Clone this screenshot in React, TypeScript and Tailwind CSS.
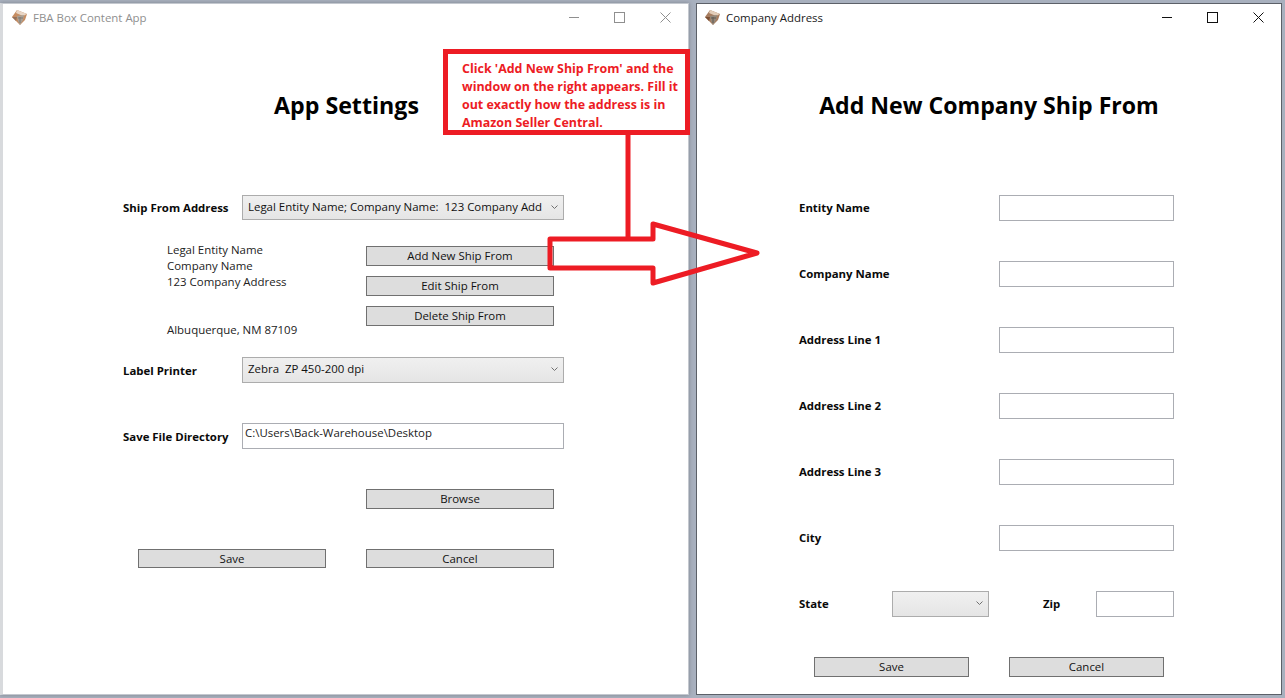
const font = "font-['Open_Sans','Noto_Sans',sans-serif]"

function BoxIcon({ faded }: { faded?: boolean }) {
    return (
        <svg width="17" height="17" viewBox="0 0 17 17" className={faded ? "opacity-80" : ""}>
            <polygon points="1,8 6,1 16,5 14,11 9,16 5,12" fill={faded ? "#b8713c" : "#a67c5e"} />
            <polygon points="6,1 16,5 12,7 5,4" fill="#e3cdb8" />
            <polygon points="6,7 13,6 12,11 9,16 7,12" fill="#94897c" />
            <polygon points="1,8 6,8 5,12" fill="#7a4f33" />
            <path d="M9 8V14M7 9H12" stroke="#5f5850" strokeWidth="1" />
        </svg>
    )
}

function WindowControls({ color }: { color: string }) {
    return (
        <div className="ml-auto flex">
            <div className="flex w-[45.5px] justify-center">
                <svg width="10" height="10" viewBox="0 0 10 10">
                    <path d="M0 5.5H10" stroke={color} />
                </svg>
            </div>
            <div className="flex w-[45.5px] justify-center">
                <svg width="11" height="11" viewBox="0 0 11 11">
                    <rect x="0.5" y="0.5" width="10" height="10" fill="none" stroke={color} />
                </svg>
            </div>
            <div className="flex w-[45.5px] justify-center">
                <svg width="11" height="11" viewBox="0 0 11 11">
                    <path d="M0.5 0.5L10.5 10.5M10.5 0.5L0.5 10.5" stroke={color} />
                </svg>
            </div>
        </div>
    )
}

function Chevron() {
    return (
        <svg width="7" height="5" viewBox="0 0 7 5" className="absolute right-[5px] top-[9px]">
            <path d="M0.5 0.5L3.5 3.5L6.5 0.5" fill="none" stroke="#707070" />
        </svg>
    )
}

function Select({ value, className }: { value?: string; className: string }) {
    return (
        <div
            className={`relative box-border flex border border-[#acacac] bg-gradient-to-b from-[#f0f0f0] to-[#e5e5e5] pl-[5px] pt-[2px] text-[11.45px] leading-[18px] text-[#111] ${className}`}
        >
            {value}
            <Chevron />
        </div>
    )
}

function Btn({ label, className }: { label: string; className: string }) {
    return (
        <button
            className={`box-border block border border-[#707070] bg-[#dddddd] text-center text-[11.45px] leading-[18px] text-[#111] ${className}`}
        >
            {label}
        </button>
    )
}

function Label({ text, className = "" }: { text: string; className?: string }) {
    return <div className={`text-[11.4px] font-bold text-[#0a0a0a] ${className}`}>{text}</div>
}

const fields = ["Entity Name", "Company Name", "Address Line 1", "Address Line 2", "Address Line 3", "City"]

export default function App() {
    return (
        <div className={`relative flex h-[698px] w-[1285px] overflow-hidden bg-[#a8b0be] pt-[3px] ${font}`}>
            {/* left window */}
            <div className="box-border h-[692px] w-[689px] border border-l-[3px] border-[#c4c8cf] border-l-[#d8dadd] bg-white shadow-[0_0_4px_rgba(0,0,0,0.25)]">
                <div className="flex h-[27px] items-center pl-[8px]">
                    <BoxIcon faded />
                    <span className="ml-[5px] text-[11.45px] text-[#8f8f8f]">FBA Box Content App</span>
                    <WindowControls color="#8f8f8f" />
                </div>
                <h1 className="mt-[54px] h-[40px] pl-[2px] text-center text-[23.2px] font-bold leading-[40px] text-black">
                    App Settings
                </h1>
                <div className="pl-[120px]">
                    <div className="mt-[70px] flex items-center">
                        <Label text="Ship From Address" className="w-[119px] pt-px" />
                        <Select value="Legal Entity Name; Company Name:  123 Company Add" className="h-[25px] w-[322px] whitespace-pre" />
                    </div>
                    <div className="mt-[22px] flex">
                        <div className="w-[243px] pl-[44px] text-[11.45px] leading-[16px] text-[#222]">
                            <div>Legal Entity Name</div>
                            <div>Company Name</div>
                            <div>123 Company Address</div>
                            <div className="h-[32px]" />
                            <div>Albuquerque, NM 87109</div>
                        </div>
                        <div className="mt-[4px] flex flex-col gap-[10px]">
                            <Btn label="Add New Ship From" className="h-[20px] w-[188px]" />
                            <Btn label="Edit Ship From" className="h-[20px] w-[188px]" />
                            <Btn label="Delete Ship From" className="h-[20px] w-[188px]" />
                        </div>
                    </div>
                    <div className="mt-[19px] flex items-center">
                        <Label text="Label Printer" className="w-[119px] pt-px" />
                        <Select value="Zebra  ZP 450-200 dpi" className="h-[26px] w-[322px] whitespace-pre" />
                    </div>
                    <div className="mt-[40px] flex items-center">
                        <Label text="Save File Directory" className="w-[119px] pt-px" />
                        <input
                            readOnly
                            value="C:\Users\Back-Warehouse\Desktop"
                            className="box-border h-[26px] w-[322px] border border-[#abadb3] bg-white pb-[8px] pl-[2px] text-[11.45px] text-[#222]"
                        />
                    </div>
                    <Btn label="Browse" className="ml-[243px] mt-[40px] h-[20px] w-[188px]" />
                    <div className="ml-[15px] mt-[40px] flex gap-[40px]">
                        <Btn label="Save" className="h-[19px] w-[188px]" />
                        <Btn label="Cancel" className="h-[19px] w-[188px]" />
                    </div>
                </div>
            </div>

            {/* right window */}
            <div className="ml-[7px] box-border h-[692px] w-[586px] border border-[#5c6068] bg-white">
                <div className="flex h-[27px] items-center pl-[7px]">
                    <BoxIcon />
                    <span className="ml-[5px] text-[11.45px] text-[#1a1a1a]">Company Address</span>
                    <WindowControls color="#111" />
                </div>
                <h1 className="mt-[54px] h-[40px] text-center text-[23.1px] font-bold leading-[40px] text-black">
                    Add New Company Ship From
                </h1>
                <div className="mt-[70px] flex flex-col gap-[40px] pl-[102px]">
                    {fields.map((field) => (
                        <div className="flex h-[26px] items-center" key={field}>
                            <Label text={field} className="w-[200px]" />
                            <input readOnly className="box-border h-[26px] w-[175px] border border-[#abadb3] bg-white" />
                        </div>
                    ))}
                    <div className="flex h-[26px] items-center">
                        <Label text="State" className="w-[93px]" />
                        <Select className="h-[26px] w-[97px]" />
                        <Label text="Zip" className="ml-[54px] w-[53px]" />
                        <input readOnly className="box-border h-[26px] w-[78px] border border-[#abadb3] bg-white" />
                    </div>
                    <div className="ml-[15px] flex gap-[40px]">
                        <Btn label="Save" className="h-[20px] w-[155px]" />
                        <Btn label="Cancel" className="h-[20px] w-[155px]" />
                    </div>
                </div>
            </div>

            {/* annotation over the windows */}
            <div className="absolute left-[443px] top-[49px] box-border h-[86px] w-[247px] border-[5px] border-[#ed1c24] bg-white pl-[14px] pt-[6px] text-[12.45px] font-bold leading-[18px] text-[#ed1c24]">
                Click 'Add New Ship From' and the
                <br />
                window on the right appears. Fill it
                <br />
                out exactly how the address is in
                <br />
                Amazon Seller Central.
            </div>
            <svg className="absolute left-[540px] top-[130px]" width="230" height="165" viewBox="540 130 230 165">
                <path d="M628 134V238" fill="none" stroke="#ed1c24" strokeWidth="5" />
                <path
                    d="M550 239H653V224L757 253L653 283V268H550Z"
                    fill="none"
                    stroke="#ed1c24"
                    strokeWidth="5"
                    strokeLinejoin="round"
                />
            </svg>
        </div>
    )
}
